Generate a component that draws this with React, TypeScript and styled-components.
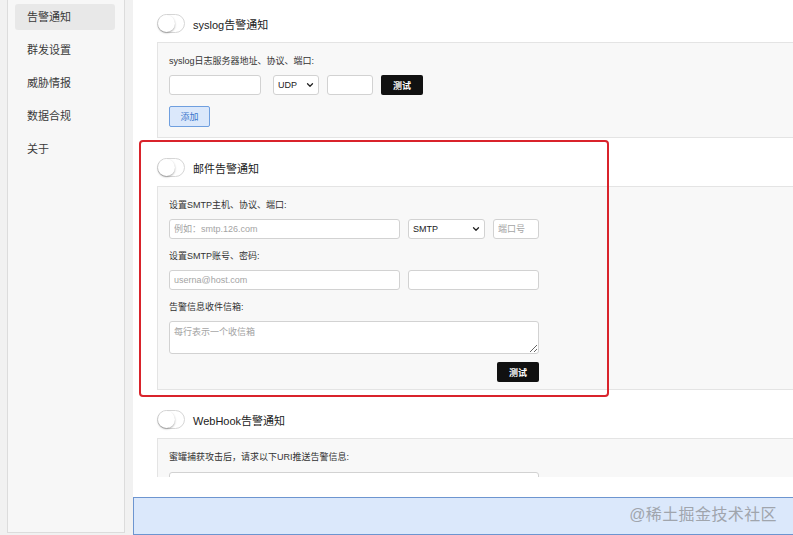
import React from 'react';
import styled, { createGlobalStyle } from 'styled-components';
import { ChevronDown } from 'lucide-react';

const GlobalStyle = createGlobalStyle`
  html, body {
    margin: 0;
    padding: 0;
    background: #f1f1f1;
    font-family: "Liberation Sans", "Noto Sans CJK SC", sans-serif;
    color: #333;
  }
  * {
    box-sizing: border-box;
  }
`;

const Page = styled.div`
  width: 793px;
  height: 535px;
  padding-left: 7px;
  display: grid;
  grid-template-columns: 118px 1fr;
  column-gap: 8px;
  overflow: hidden;
`;

const Sidebar = styled.nav`
  height: 533px;
  background: #f7f7f7;
  border: 1px solid #dcdcdc;
  border-top: none;
  padding: 4px 9px 0 7px;
  display: flex;
  flex-direction: column;
  gap: 7px;
`;

const NavItem = styled.div<{ $active?: boolean }>`
  height: 26px;
  line-height: 26px;
  padding-left: 12px;
  font-size: 11px;
  color: #3a3a3a;
  border-radius: 3px;
  background: ${(p) => (p.$active ? '#e8e8e8' : 'transparent')};
`;

const RightColumn = styled.div`
  display: flex;
  flex-direction: column;
`;

const Main = styled.main`
  background: #fff;
  padding-bottom: 20px;
`;

const Scroll = styled.div`
  position: relative;
  height: 477px;
  overflow: hidden;
`;

const SectionHeader = styled.div<{ $first?: boolean }>`
  display: flex;
  align-items: center;
  gap: 8px;
  padding: ${(p) => (p.$first ? '14px' : '20px')} 0 9px 24px;
  font-size: 11px;
  color: #222;
`;

const Toggle = styled.span`
  position: relative;
  width: 28px;
  height: 19px;
  border-radius: 10px;
  border: 1px solid #d6d6d6;
  background: #fff;
  flex-shrink: 0;

  &::after {
    content: '';
    position: absolute;
    left: 0;
    top: 0;
    width: 17px;
    height: 17px;
    border-radius: 50%;
    background: #fff;
    box-shadow: 0 1px 2px rgba(0, 0, 0, 0.35);
  }
`;

const Panel = styled.section`
  margin-left: 24px;
  background: #f8f8f8;
  border: 1px solid #e4e4e4;
  border-right: none;
  padding: 11px 11px 8px;
`;

const FieldLabel = styled.div<{ $spaced?: boolean }>`
  font-size: 9px;
  line-height: 14px;
  color: #333;
  margin-top: ${(p) => (p.$spaced ? '10px' : '0')};
  margin-bottom: 7px;
`;

const Row = styled.div`
  display: flex;
  align-items: center;
  gap: 8px;
`;

const TextInput = styled.input<{ $w: number }>`
  width: ${(p) => p.$w}px;
  height: 20px;
  border: 1px solid #d2d2d2;
  border-radius: 3px;
  background: #fff;
  padding: 0 4px;
  font-family: "Liberation Sans", "Noto Sans CJK SC", sans-serif;
  font-size: 9px;
  color: #333;
  outline: none;

  &::placeholder {
    color: #a4a4a4;
  }
`;

const SelectBox = styled.div<{ $w: number }>`
  width: ${(p) => p.$w}px;
  height: 20px;
  border: 1px solid #d2d2d2;
  border-radius: 3px;
  background: #fff;
  padding: 0 3px 0 4px;
  display: flex;
  align-items: center;
  justify-content: space-between;
  font-size: 9px;
  color: #222;
`;

const TextArea = styled.textarea`
  display: block;
  width: 370px;
  height: 33px;
  border: 1px solid #d2d2d2;
  border-radius: 3px;
  background: #fff;
  padding: 3px 4px;
  font-family: "Liberation Sans", "Noto Sans CJK SC", sans-serif;
  font-size: 9px;
  outline: none;

  &::placeholder {
    color: #a4a4a4;
  }
`;

const DarkButton = styled.button`
  width: 42px;
  height: 20px;
  border: none;
  border-radius: 2px;
  background: #111;
  color: #fff;
  font-family: "Liberation Sans", "Noto Sans CJK SC", sans-serif;
  font-size: 9px;
  font-weight: bold;
  padding: 0;
`;

const AddButton = styled.button`
  margin: 11px 0 2px;
  width: 41px;
  height: 21px;
  border: 1px solid #6f9fdf;
  border-radius: 2px;
  background: #dbe8fb;
  color: #3a76cc;
  font-family: "Liberation Sans", "Noto Sans CJK SC", sans-serif;
  font-size: 9px;
  padding: 0;
`;

const Actions = styled.div`
  width: 370px;
  margin: 8px 0 -1px;
  display: flex;
  justify-content: flex-end;
`;

const Highlight = styled.div`
  position: absolute;
  left: 6px;
  top: 140px;
  width: 470px;
  height: 257px;
  border: 2px solid #d9232b;
  border-radius: 4px;
  pointer-events: none;
`;

const InfoBar = styled.div`
  flex: 1;
  background: #dbe8fb;
  border: 1px solid #6d95d0;
  border-right: none;
  display: flex;
  justify-content: flex-end;
  padding: 3px 16px 0 0;
`;

const Watermark = styled.span`
  font-size: 16px;
  color: #a0a5ad;
  letter-spacing: 0.4px;
`;

const navItems = ['告警通知', '群发设置', '威胁情报', '数据合规', '关于'];

export default function App() {
  return (
    <>
      <GlobalStyle />
      <Page>
        <Sidebar>
          {navItems.map((item, i) => (
            <NavItem key={item} $active={i === 0}>
              {item}
            </NavItem>
          ))}
        </Sidebar>
        <RightColumn>
          <Main>
            <Scroll>
              <SectionHeader $first>
                <Toggle />
                syslog告警通知
              </SectionHeader>
              <Panel>
                <FieldLabel>syslog日志服务器地址、协议、端口:</FieldLabel>
                <Row>
                  <TextInput $w={92} />
                  <SelectBox $w={46} style={{ marginLeft: 4 }}>
                    UDP
                    <ChevronDown size={10} strokeWidth={3} />
                  </SelectBox>
                  <TextInput $w={46} />
                  <DarkButton>测试</DarkButton>
                </Row>
                <AddButton>添加</AddButton>
              </Panel>

              <SectionHeader>
                <Toggle />
                邮件告警通知
              </SectionHeader>
              <Panel>
                <FieldLabel>设置SMTP主机、协议、端口:</FieldLabel>
                <Row>
                  <TextInput $w={231} placeholder="例如：smtp.126.com" />
                  <SelectBox $w={77}>
                    SMTP
                    <ChevronDown size={10} strokeWidth={3} />
                  </SelectBox>
                  <TextInput $w={46} placeholder="端口号" />
                </Row>
                <FieldLabel $spaced>设置SMTP账号、密码:</FieldLabel>
                <Row>
                  <TextInput $w={231} placeholder="userna@host.com" />
                  <TextInput $w={131} />
                </Row>
                <FieldLabel $spaced>告警信息收件信箱:</FieldLabel>
                <TextArea placeholder="每行表示一个收信箱" />
                <Actions>
                  <DarkButton>测试</DarkButton>
                </Actions>
              </Panel>

              <SectionHeader>
                <Toggle />
                WebHook告警通知
              </SectionHeader>
              <Panel>
                <FieldLabel>蜜罐捕获攻击后，请求以下URI推送告警信息:</FieldLabel>
                <TextInput $w={370} placeholder="例如：http://example.com/alert" />
              </Panel>

              <Highlight />
            </Scroll>
          </Main>
          <InfoBar>
            <Watermark>@稀土掘金技术社区</Watermark>
          </InfoBar>
        </RightColumn>
      </Page>
    </>
  );
}
